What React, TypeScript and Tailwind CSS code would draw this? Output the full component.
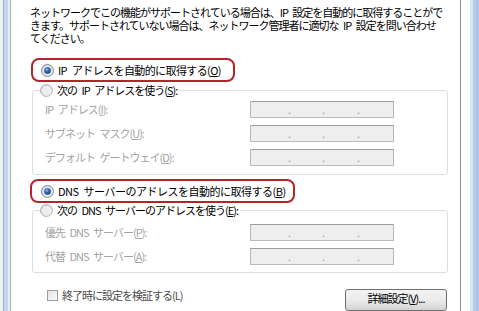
import type { ReactNode } from "react";

// Radio button in the Vista style
const Radio = ({ checked = false }: { checked?: boolean }) => (
  <svg width="13" height="13" viewBox="0 0 13 13" className="shrink-0">
    <defs>
      <linearGradient id="rg-off" x1="0" y1="0" x2="1" y2="1">
        <stop offset="0" stopColor="#cfcfcf" />
        <stop offset="1" stopColor="#f6f6f6" />
      </linearGradient>
      <radialGradient id="rg-dot" cx="0.4" cy="0.35" r="0.7">
        <stop offset="0" stopColor="#8fc0f0" />
        <stop offset="0.45" stopColor="#2d6cb6" />
        <stop offset="1" stopColor="#0f2f5c" />
      </radialGradient>
    </defs>
    <circle cx="6.5" cy="6.5" r="6" fill="url(#rg-off)" stroke={checked ? "#7a8a9a" : "#b4b4b4"} />
    <circle cx="6.5" cy="6.5" r="4.5" fill={checked ? "#e9eef3" : "#eeeeee"} />
    {checked && <circle cx="6.5" cy="6.5" r="3.3" fill="url(#rg-dot)" stroke="#5d87b8" strokeWidth="0.6" />}
  </svg>
);

const IpBox = () => (
  <div className="w-[144px] h-[17px] border border-[#b9b9b9] border-t-[#9e9e9e] bg-[#eeeeee] flex items-center pb-[1px] text-[#9a9a9a]">
    <span className="w-[39px] text-right">.</span>
    <span className="w-[34px] text-right">.</span>
    <span className="w-[35px] text-right">.</span>
  </div>
);

const Row = ({ label }: { label: ReactNode }) => (
  <div className="flex items-center h-[17px]">
    <span className="w-[205px] text-[#a3a3a3]">{label}</span>
    <IpBox />
  </div>
);

const Mn = ({ c }: { c: string }) => <u className="underline-offset-[1px]">{c}</u>;

// en space, so the gaps survive the tight tracking
const S = "\u2002";

export default function App() {
  return (
    <div className="w-[479px] h-[311px] flex overflow-hidden bg-white text-black text-[11px] tracking-[-1px] font-['Noto_Sans_CJK_JP',sans-serif]">
      {/* left window frame */}
      <div className="flex shrink-0">
        <div className="w-[3px] bg-[#eef1f4]" />
        <div className="w-[1px] bg-[#a6b1bf]" />
        <div className="w-[4px] bg-[#c3d5ec]" />
        <div className="w-[2px] bg-[#e4ebf4]" />
        <div className="w-[1px] bg-[#a4aebb]" />
      </div>

      <main className="w-[450px] shrink-0 border-r border-[#8c8c8c] pl-[19px] flex flex-col leading-[13px]">
        <p className="pt-[6px] whitespace-nowrap">
          ネットワークでこの機能がサポートされている場合は、IP{S}設定を自動的に取得することがで
          <br />
          きます。サポートされていない場合は、ネットワーク管理者に適切な{S}IP{S}設定を問い合わせ
          <br />
          てください。
        </p>

        <div className="mt-[13px] ml-[1px] w-[204px] h-[26px] border-2 border-[#b3242b] rounded-[8px] flex items-center pl-[8px] gap-[4px]">
          <Radio checked />
          <span className="tracking-[-0.6px]">
            IP{S}アドレスを自動的に取得する(<Mn c="O" />)
          </span>
        </div>

        <fieldset className="mt-[1px] ml-[2px] w-[416px] border border-[#d5dfe5] rounded-[3px]">
          <legend className="ml-[7px] flex items-center gap-[4px] h-[14px] bg-white pr-[2px]">
            <Radio />
            <span>
              次の{S}IP{S}アドレスを使う(<Mn c="S" />):
            </span>
          </legend>
          <div className="flex flex-col gap-[7px] pl-[12px] pt-[4px] pb-[8px]">
            <Row label={<>IP{S}アドレス(<Mn c="I" />):</>} />
            <Row label={<>サブネット{S}マスク(<Mn c="U" />):</>} />
            <Row label={<>デフォルト{S}ゲートウェイ(<Mn c="D" />):</>} />
          </div>
        </fieldset>

        <div className="mt-[4px] w-[265px] h-[26px] border-2 border-[#b3242b] rounded-[8px] flex items-center pl-[9px] gap-[4px]">
          <Radio checked />
          <span className="tracking-[-0.5px]">
            DNS{S}サーバーのアドレスを自動的に取得する(<Mn c="B" />)
          </span>
        </div>

        <fieldset className="ml-[2px] w-[416px] border border-[#d5dfe5] rounded-[3px]">
          <legend className="ml-[7px] flex items-center gap-[4px] h-[14px] bg-white pr-[2px]">
            <Radio />
            <span>
              次の{S}DNS{S}サーバーのアドレスを使う(<Mn c="E" />):
            </span>
          </legend>
          <div className="flex flex-col gap-[7px] pl-[12px] pt-[7px] pb-[7px]">
            <Row label={<>優先{S}DNS{S}サーバー(<Mn c="P" />):</>} />
            <Row label={<>代替{S}DNS{S}サーバー(<Mn c="A" />):</>} />
          </div>
        </fieldset>

        <div className="mt-[16px] flex items-start">
          <div className="ml-[17px] flex items-center gap-[4px] h-[13px] text-[#4a4a4a]">
            <span className="w-[11px] h-[11px] border border-[#9c9c9c] bg-gradient-to-br from-[#e2e2e2] to-[#fafafa]" />
            <span>終了時に設定を検証する(L)</span>
          </div>
          <button className="ml-auto mr-[13px] w-[102px] h-[22px] rounded-[3px] border border-[#707070] bg-gradient-to-b from-[#f3f3f3] via-[#ebebeb] to-[#d3d3d3] flex items-center justify-center pb-[3px] tracking-[-1px]">
            詳細設定(<Mn c="V" />)...
          </button>
        </div>
      </main>

      {/* right window frame */}
      <div className="w-[9px] shrink-0 bg-white" />
      <div className="flex shrink-0">
        <div className="w-[3px] bg-[#cfe9f3]" />
        <div className="w-[7px] bg-gradient-to-r from-[#b8cdea] to-[#a9bfe4]" />
      </div>
    </div>
  );
}
